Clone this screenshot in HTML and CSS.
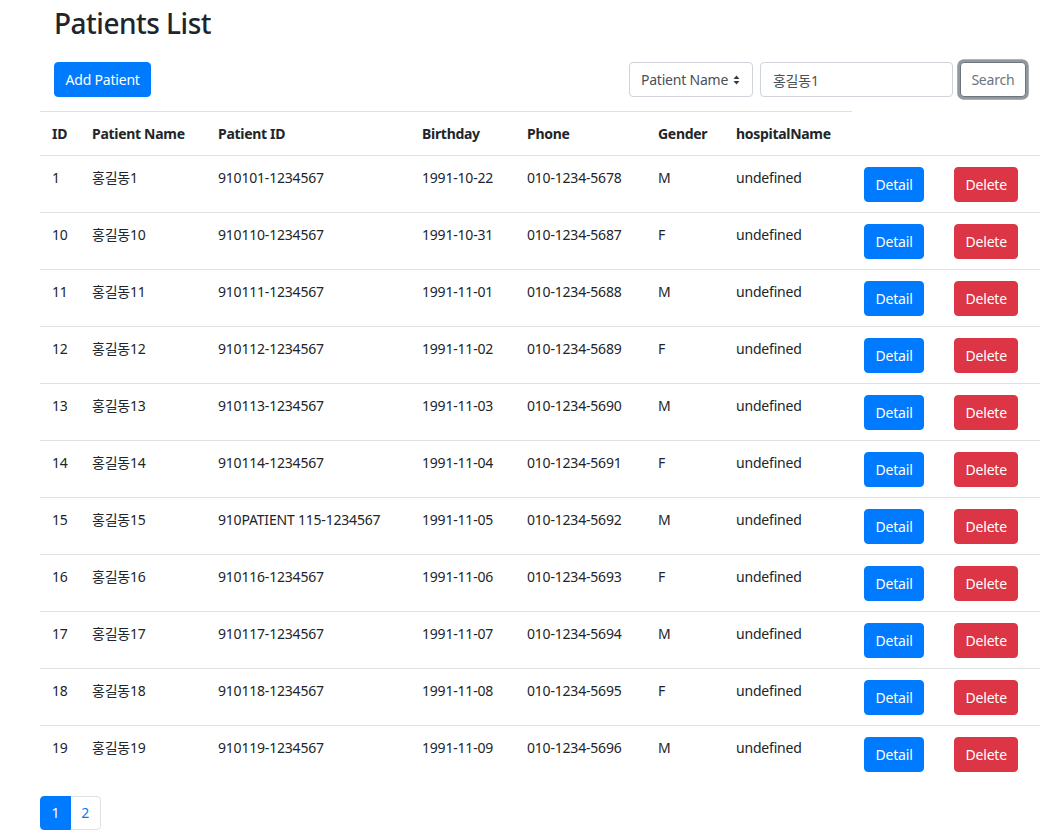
FILE: index.html
```html
<!DOCTYPE html>
<html lang="ko">
<head>
<meta charset="utf-8">
<title>Patients List</title>
<link rel="stylesheet" href="styles.css">
</head>
<body>
<div class="page">
  <h1 class="title">Patients List</h1>
  <div class="toolbar">
    <button class="btn btn-primary">Add Patient</button>
    <form class="search">
      <div class="select">
        <span>Patient Name</span>
        <svg class="caret" width="7" height="10" viewBox="0 0 7 10"><path d="M3.5 0.5 L6.5 4 L0.5 4 Z M3.5 9.5 L6.5 6 L0.5 6 Z" fill="#343a40"/></svg>
      </div>
      <input class="input" type="text" value="홍길동1">
      <button type="button" class="btn btn-outline focused">Search</button>
    </form>
  </div>
  <table class="table">
    <colgroup>
      <col class="c-id"><col class="c-name"><col class="c-pid"><col class="c-birth"><col class="c-phone"><col class="c-gender"><col class="c-hosp"><col class="c-detail"><col class="c-delete">
    </colgroup>
    <thead>
      <tr><th>ID</th><th>Patient Name</th><th>Patient ID</th><th>Birthday</th><th>Phone</th><th>Gender</th><th>hospitalName</th></tr>
    </thead>
    <tbody>
      <tr><td>1</td><td>홍길동1</td><td>910101-1234567</td><td>1991-10-22</td><td>010-1234-5678</td><td>M</td><td>undefined</td><td><button class="btn btn-primary">Detail</button></td><td><button class="btn btn-danger">Delete</button></td></tr>
      <tr><td>10</td><td>홍길동10</td><td>910110-1234567</td><td>1991-10-31</td><td>010-1234-5687</td><td>F</td><td>undefined</td><td><button class="btn btn-primary">Detail</button></td><td><button class="btn btn-danger">Delete</button></td></tr>
      <tr><td>11</td><td>홍길동11</td><td>910111-1234567</td><td>1991-11-01</td><td>010-1234-5688</td><td>M</td><td>undefined</td><td><button class="btn btn-primary">Detail</button></td><td><button class="btn btn-danger">Delete</button></td></tr>
      <tr><td>12</td><td>홍길동12</td><td>910112-1234567</td><td>1991-11-02</td><td>010-1234-5689</td><td>F</td><td>undefined</td><td><button class="btn btn-primary">Detail</button></td><td><button class="btn btn-danger">Delete</button></td></tr>
      <tr><td>13</td><td>홍길동13</td><td>910113-1234567</td><td>1991-11-03</td><td>010-1234-5690</td><td>M</td><td>undefined</td><td><button class="btn btn-primary">Detail</button></td><td><button class="btn btn-danger">Delete</button></td></tr>
      <tr><td>14</td><td>홍길동14</td><td>910114-1234567</td><td>1991-11-04</td><td>010-1234-5691</td><td>F</td><td>undefined</td><td><button class="btn btn-primary">Detail</button></td><td><button class="btn btn-danger">Delete</button></td></tr>
      <tr><td>15</td><td>홍길동15</td><td>910PATIENT 115-1234567</td><td>1991-11-05</td><td>010-1234-5692</td><td>M</td><td>undefined</td><td><button class="btn btn-primary">Detail</button></td><td><button class="btn btn-danger">Delete</button></td></tr>
      <tr><td>16</td><td>홍길동16</td><td>910116-1234567</td><td>1991-11-06</td><td>010-1234-5693</td><td>F</td><td>undefined</td><td><button class="btn btn-primary">Detail</button></td><td><button class="btn btn-danger">Delete</button></td></tr>
      <tr><td>17</td><td>홍길동17</td><td>910117-1234567</td><td>1991-11-07</td><td>010-1234-5694</td><td>M</td><td>undefined</td><td><button class="btn btn-primary">Detail</button></td><td><button class="btn btn-danger">Delete</button></td></tr>
      <tr><td>18</td><td>홍길동18</td><td>910118-1234567</td><td>1991-11-08</td><td>010-1234-5695</td><td>F</td><td>undefined</td><td><button class="btn btn-primary">Detail</button></td><td><button class="btn btn-danger">Delete</button></td></tr>
      <tr><td>19</td><td>홍길동19</td><td>910119-1234567</td><td>1991-11-09</td><td>010-1234-5696</td><td>M</td><td>undefined</td><td><button class="btn btn-primary">Detail</button></td><td><button class="btn btn-danger">Delete</button></td></tr>
    </tbody>
  </table>
  <nav class="pagination">
    <a class="page-link active">1</a>
    <a class="page-link">2</a>
  </nav>
</div>
</body>
</html>
```

FILE: styles.css
```css
html, body {
  margin: 0;
  padding: 0;
  background: #fff;
}

body {
  font-family: "Noto Sans", "Noto Sans CJK KR", sans-serif;
  font-size: 14px;
  line-height: 21px;
  letter-spacing: -0.2px;
  color: #212529;
}

.page {
  width: 1000px;
  padding: 0 16px 0 40px;
}

.title {
  margin: 0 14px;
  padding-top: 5px;
  font-size: 28px;
  line-height: 36px;
  font-weight: 500;
  letter-spacing: -0.5px;
  color: #212529;
}

.toolbar {
  display: flex;
  justify-content: space-between;
  align-items: center;
  margin: 21px 14px 14px;
}

.btn {
  display: inline-block;
  font-family: inherit;
  font-size: 14px;
  line-height: 21px;
  letter-spacing: -0.2px;
  padding: 6px 10.5px;
  border: 1px solid transparent;
  border-radius: 4px;
  background: transparent;
  cursor: pointer;
  box-sizing: border-box;
  height: 35px;
}

.btn-primary {
  background: #007bff;
  border-color: #007bff;
  color: #fff;
}

.btn-danger {
  background: #dc3545;
  border-color: #dc3545;
  color: #fff;
}

.btn-outline {
  color: #6c757d;
  border-color: #6c757d;
  background: #fff;
}

.btn-outline.focused {
  box-shadow: 0 0 0 2.8px rgba(108, 117, 125, 0.75);
}

.search {
  display: flex;
  align-items: center;
  gap: 7px;
  margin: 0;
}

.select {
  display: flex;
  align-items: center;
  justify-content: space-between;
  box-sizing: border-box;
  width: 124px;
  height: 35px;
  padding: 0 12px 0 11px;
  border: 1px solid #ced4da;
  border-radius: 4px;
  color: #495057;
}

.caret {
  display: block;
}

.input {
  box-sizing: border-box;
  width: 193px;
  height: 35px;
  padding: 0 12px;
  border: 1px solid #ced4da;
  border-radius: 4px;
  font-family: inherit;
  font-size: 14px;
  letter-spacing: -0.2px;
  color: #495057;
  outline: none;
}

.table {
  width: 1000px;
  table-layout: fixed;
  border-collapse: collapse;
  margin-bottom: 14px;
}

.c-id { width: 40px; }
.c-name { width: 126px; }
.c-pid { width: 204px; }
.c-birth { width: 105px; }
.c-phone { width: 131px; }
.c-gender { width: 78px; }
.c-hosp { width: 128px; }
.c-detail { width: 90px; }
.c-delete { width: 98px; }

.table th {
  text-align: left;
  font-weight: 700;
  letter-spacing: -0.3px;
  padding: 11px 12px;
  border-top: 1px solid #dee2e6;
  vertical-align: bottom;
  white-space: nowrap;
}

.table td {
  padding: 10.5px 12px;
  border-top: 1px solid #dee2e6;
  vertical-align: top;
  white-space: nowrap;
}

.pagination {
  display: flex;
}

.page-link {
  display: block;
  box-sizing: border-box;
  height: 34px;
  padding: 7px 10.5px;
  line-height: 18px;
  border: 1px solid #dee2e6;
  color: #007bff;
  text-decoration: none;
  background: #fff;
}

.page-link + .page-link {
  margin-left: -1px;
}

.page-link:first-child {
  border-radius: 4px 0 0 4px;
}

.page-link:last-child {
  border-radius: 0 4px 4px 0;
}

.page-link.active {
  background: #007bff;
  border-color: #007bff;
  color: #fff;
  position: relative;
  z-index: 1;
}
```
